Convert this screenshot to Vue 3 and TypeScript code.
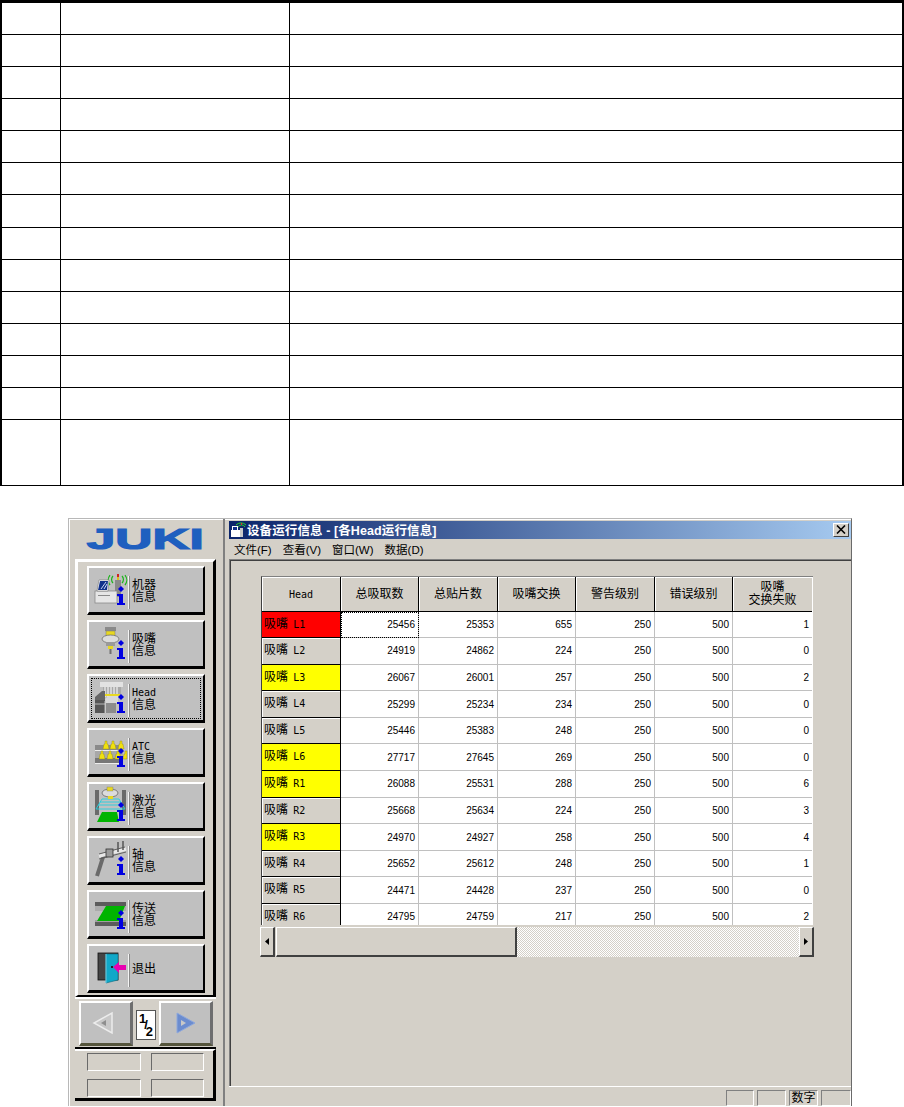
<script setup lang="ts">
interface NavItem { key: string; lines: string[]; focused?: boolean }
interface Row { name: string; tone: string; values: number[] }

const navItems: NavItem[] = [
  { key: 'machine', lines: ['机器', '信息'] },
  { key: 'nozzle', lines: ['吸嘴', '信息'] },
  { key: 'head', lines: ['Head', '信息'], focused: true },
  { key: 'atc', lines: ['ATC', '信息'] },
  { key: 'laser', lines: ['激光', '信息'] },
  { key: 'axis', lines: ['轴', '信息'] },
  { key: 'conveyor', lines: ['传送', '信息'] },
  { key: 'exit', lines: ['退出'] },
]

const headers = ['总吸取数', '总贴片数', '吸嘴交换', '警告级别', '错误级别']

const rows: Row[] = [
  { name: 'L1', tone: 'red', values: [25456, 25353, 655, 250, 500, 1] },
  { name: 'L2', tone: '', values: [24919, 24862, 224, 250, 500, 0] },
  { name: 'L3', tone: 'yellow', values: [26067, 26001, 257, 250, 500, 2] },
  { name: 'L4', tone: '', values: [25299, 25234, 234, 250, 500, 0] },
  { name: 'L5', tone: '', values: [25446, 25383, 248, 250, 500, 0] },
  { name: 'L6', tone: 'yellow', values: [27717, 27645, 269, 250, 500, 0] },
  { name: 'R1', tone: 'yellow', values: [26088, 25531, 288, 250, 500, 6] },
  { name: 'R2', tone: '', values: [25668, 25634, 224, 250, 500, 3] },
  { name: 'R3', tone: 'yellow', values: [24970, 24927, 258, 250, 500, 4] },
  { name: 'R4', tone: '', values: [25652, 25612, 248, 250, 500, 1] },
  { name: 'R5', tone: '', values: [24471, 24428, 237, 250, 500, 0] },
  { name: 'R6', tone: '', values: [24795, 24759, 217, 250, 500, 2] },
]

const blankCells = Array.from({ length: 42 }, (_, i) => i)
const menus = ['文件(F)', '查看(V)', '窗口(W)', '数据(D)']
</script>

<template>
  <div class="page">
    <div class="blank-table">
      <div v-for="c in blankCells" :key="c" class="blank-cell"></div>
    </div>

    <div class="window">
      <aside class="side">
        <div class="logo">
          <svg width="122" height="34" viewBox="0 0 69 34" preserveAspectRatio="none">
            <text
              x="0.5"
              y="27"
              font-family="Liberation Sans, sans-serif"
              font-weight="700"
              font-size="29"
              fill="#1f5fbf"
              stroke="#1f5fbf"
              stroke-width="1.2"
              stroke-linejoin="miter"
            >JUKI</text>
          </svg>
        </div>

        <div class="frame nav-frame">
          <button
            v-for="item in navItems"
            :key="item.key"
            type="button"
            class="nav-btn"
            :class="{ focused: item.focused }"
          >
            <svg class="nav-icon" width="38" height="44" viewBox="0 0 38 44">
              <template v-if="item.key === 'machine'">
                <path d="M20 7a8 8 0 0 0 0 10M23 8a5 5 0 0 0 0 7M35 7a8 8 0 0 1 0 10M32 8a5 5 0 0 1 0 7" fill="none" stroke="#19b519" stroke-width="1.2" />
                <rect x="27" y="6" width="2" height="3" fill="#d02020" />
                <rect x="27" y="9" width="2" height="3" fill="#d8c020" />
                <rect x="25" y="12" width="6" height="17" fill="#8a8a8a" />
                <rect x="5" y="23" width="22" height="12" fill="#e6e6e6" stroke="#8a8a8a" stroke-width="0.8" />
                <rect x="8" y="27" width="12" height="1" fill="#8a8a8a" />
                <path d="M9 12h10l-1 11H7z" fill="#fff" stroke="#777" stroke-width="0.6" />
                <path d="M10 13h8l-1 9H8z" fill="#10308a" />
                <path d="M11 21l5-7M14 21l3-5" stroke="#c8d4f0" stroke-width="1" />
              </template>

              <template v-else-if="item.key === 'nozzle'">
                <rect x="15" y="5" width="11" height="4" fill="#8a8a8a" />
                <rect x="16" y="9" width="9" height="5" fill="#e8d820" stroke="#777" stroke-width="0.5" />
                <ellipse cx="20.5" cy="17" rx="8.5" ry="4" fill="#dcdcdc" stroke="#707070" stroke-width="0.8" />
                <rect x="16" y="20" width="9" height="4" fill="#9a9a9a" />
                <rect x="18" y="24" width="5" height="3" fill="#e8d820" />
                <rect x="19.500" y="27" width="2" height="5" fill="#707070" />
              </template>

              <template v-else-if="item.key === 'head'">
                <rect x="10" y="6" width="23" height="5" fill="#e2e2e2" />
                <rect x="13" y="11" width="18" height="8" fill="#a8a8a8" />
                <path d="M15 11v10M18 11v10M21 11v10M24 11v10M27 11v10" stroke="#fff" stroke-width="1" />
                <path d="M14 19h16" stroke="#e8d820" stroke-width="2" />
                <path d="M5 21l7-6h3v9H5z" fill="#666" />
                <path d="M5 24h10v13H5z" fill="#555" />
                <path d="M15 23l4-3h9v7H16z" fill="#d8d8d8" />
                <path d="M16 27h10v10H16z" fill="#8c8c8c" />
                <path d="M15 25v12M5 28h10" stroke="#d0d0d0" stroke-width="0.8" />
              </template>

              <template v-else-if="item.key === 'atc'">
                <rect x="5" y="15" width="28" height="5" fill="#8a8a8a" />
                <rect x="5" y="20" width="28" height="1" fill="#eee" />
                <rect x="5" y="21" width="28" height="7" fill="#a8a8a8" />
                <rect x="5" y="28" width="28" height="5" fill="#777" />
                <rect x="5" y="33" width="28" height="1" fill="#eee" />
                <g fill="#f0e010" stroke="#8a8420" stroke-width="0.4">
                  <path d="M13 19l1-5h1v-3h2v3h1l1 5zM20 19l1-5h1v-3h2v3h1l1 5zM28 19l1-5h1v-3h2v3h1l1 5z" />
                  <path d="M9 29l1-5h1v-3h2v3h1l1 5zM17 29l1-5h1v-3h2v3h1l1 5zM25 29l1-5h1v-3h2v3h1l1 5zM33 29l1-5h1v-3h2v8z" />
                </g>
              </template>

              <template v-else-if="item.key === 'laser'">
                <rect x="5" y="6" width="4" height="25" fill="#6a6a6a" />
                <rect x="32" y="6" width="4" height="25" fill="#6a6a6a" />
                <path d="M12 15h17M10 18h21M8 21h25M6 25h29" stroke="#20d0e0" stroke-width="0.9" />
                <path d="M12 15L6 25M29 15l6 10" stroke="#20d0e0" stroke-width="0.9" />
                <ellipse cx="20" cy="9" rx="8" ry="4" fill="#dcdcdc" stroke="#666" stroke-width="0.8" />
                <rect x="17" y="3" width="6" height="4" fill="#e8d820" stroke="#777" stroke-width="0.4" />
                <rect x="18" y="12" width="5" height="3" fill="#e8d820" />
                <path d="M12 28h15l2 10H7z" fill="#00b400" />
              </template>

              <template v-else-if="item.key === 'axis'">
                <path d="M7 38l7-22" stroke="#6a6a6a" stroke-width="4" />
                <path d="M9 18l27-7" stroke="#e8e8e8" stroke-width="3.500" />
                <path d="M9 21l27-7M9 16l26-7" stroke="#555" stroke-width="0.9" />
                <rect x="16" y="11" width="7" height="8" fill="#9a9a9a" stroke="#333" stroke-width="0.8" />
                <path d="M28 4v10M33 3v9" stroke="#555" stroke-width="1.5" />
              </template>

              <template v-else-if="item.key === 'conveyor'">
                <rect x="5" y="10" width="31" height="4" fill="#5c5c5c" />
                <rect x="5" y="14" width="31" height="5" fill="#ababab" />
                <rect x="5" y="28" width="31" height="2" fill="#a0a0a0" />
                <rect x="5" y="30" width="31" height="4" fill="#5c5c5c" />
                <path d="M16 14h19l-6 15H7z" fill="#00b400" />
              </template>

              <template v-else>
                <rect x="8" y="7" width="20" height="27" fill="#444" stroke="#111" stroke-width="0.8" />
                <path d="M16 8h12v26l-12 3z" fill="#10a8c8" stroke="#0a6a80" stroke-width="0.6" />
                <path d="M16 8v29" stroke="#7adcf0" stroke-width="1" />
                <rect x="21" y="20" width="2" height="2" fill="#222" />
                <path d="M23 21l6-5v3h7v5h-7v3z" fill="#e800b0" />
              </template>

              <g v-if="item.key !== 'exit'" fill="#0000e0">
                <path d="M31 18l3 3-3 3-3-3z" />
                <path d="M27 26h6v9h2v2H27v-2h2v-7h-2z" />
              </g>
            </svg>
            <span class="nav-sep"></span>
            <span class="nav-label">
              <span
                v-for="line in item.lines"
                :key="line"
                :class="{ mono: /^[A-Za-z]+$/.test(line) }"
              >{{ line }}</span>
            </span>
          </button>
        </div>

        <div class="frame pager">
          <button type="button" class="page-btn back">
            <svg width="22" height="24" viewBox="0 0 22 24">
              <path d="M20 2v20L2 12z" fill="#c8c8c8" stroke="#ececec" stroke-width="1.5" />
              <path d="M14 9v6l-5-3z" fill="#8e8e8e" />
            </svg>
          </button>
          <div class="page-num"><span class="n1">1</span><span class="sl">/</span><span class="n2">2</span></div>
          <button type="button" class="page-btn">
            <svg width="22" height="24" viewBox="0 0 22 24">
              <path d="M2 2v20l18-10z" fill="#6b8ccf" stroke="#8ea8dc" stroke-width="1" />
              <path d="M6 9v6l5-3z" fill="#c8c8c8" />
            </svg>
          </button>
        </div>

        <div class="frame slots">
          <div v-for="n in 4" :key="n" class="slot"></div>
        </div>
      </aside>

      <main class="main">
        <div class="titlebar">
          <svg class="title-icon" width="16" height="16" viewBox="0 0 16 16">
            <path d="M1 8h9v7H1z" fill="#fff" />
            <path d="M2 4h6v5H2z" fill="#fff" />
            <path d="M3 5h4v3H3z" fill="#10308a" />
            <rect x="10" y="6" width="3" height="9" fill="#c8c8c8" />
            <path d="M8 5a4 4 0 0 1 7 0M6 3a7 7 0 0 1 10 0" fill="none" stroke="#2cd02c" stroke-width="1" />
            <rect x="11" y="1" width="1" height="2" fill="#e03030" />
          </svg>
          <span class="title-text">设备运行信息 - [各Head运行信息]</span>
          <button type="button" class="close-btn" aria-label="关闭">
            <svg width="10" height="9" viewBox="0 0 10 9">
              <path d="M1 0.5l8 8M9 0.5l-8 8" stroke="#000" stroke-width="1.6" />
            </svg>
          </button>
        </div>

        <nav class="menu">
          <span v-for="m in menus" :key="m">{{ m }}</span>
        </nav>

        <div class="client">
          <div class="grid-wrap">
            <div class="grid">
              <div class="hcell mono">Head</div>
              <div v-for="h in headers" :key="h" class="hcell">{{ h }}</div>
              <div class="hcell two"><span>吸嘴</span><span>交换失败</span></div>

              <template v-for="(row, r) in rows" :key="row.name">
                <div class="rowhead" :class="row.tone">吸嘴 <span class="mono">{{ row.name }}</span></div>
                <div
                  v-for="(v, i) in row.values"
                  :key="i"
                  class="cell"
                  :class="{ current: r === 0 && i === 0 }"
                >{{ v }}</div>
              </template>
            </div>
          </div>

          <div class="hscroll">
            <div class="sb-btn"><svg width="4" height="7" viewBox="0 0 4 7"><path d="M4 0v7L0 3.5z" fill="#000" /></svg></div>
            <div class="sb-thumb"></div>
            <div class="sb-track"></div>
            <div class="sb-btn"><svg width="4" height="7" viewBox="0 0 4 7"><path d="M0 0v7l4-3.5z" fill="#000" /></svg></div>
          </div>
        </div>

        <footer class="status">
          <div class="st w28"></div>
          <div class="st w29"></div>
          <div class="st w29">数字</div>
          <div class="st w30"></div>
        </footer>
      </main>
    </div>
  </div>
</template>

<style>
html, body { margin: 0; background: #fff; }
</style>

<style scoped>
.page {
  width: 904px;
  font-family: "Liberation Sans", "Noto Sans CJK SC", sans-serif;
  color: #000;
}

.blank-table {
  display: grid;
  grid-template-columns: 59px 229px 1fr;
  grid-template-rows: repeat(13, 32.08px) 64.500px;
  box-sizing: border-box;
  width: 904px;
  border-top: 3px solid #000;
  border-left: 2px solid #000;
  border-right: 2px solid #000;
  border-bottom: 1px solid #000;
}
.blank-cell {
  box-sizing: border-box;
  border-right: 1px solid #000;
  border-bottom: 1px solid #000;
}
.blank-cell:nth-child(3n) { border-right: 0; }
.blank-cell:nth-last-child(-n + 3) { border-bottom: 0; }

.window {
  display: flex;
  box-sizing: border-box;
  width: 784px;
  height: 588px;
  margin: 32px 0 0 68px;
  background: #d4d0c8;
  border-top: 1px solid #b8b8b8;
  border-left: 1px solid #b8b8b8;
  border-right: 1px solid #6a6a6a;
  box-shadow: inset 1px 1px 0 #fff;
}

/* left panel */
.side {
  box-sizing: border-box;
  width: 156px;
  flex: none;
  padding-left: 6px;
  border-right: 2px solid #808080;
}
.logo {
  height: 40px;
  display: flex;
  align-items: center;
  padding-left: 11px;
}
.logo svg { display: block; }
.frame {
  box-sizing: border-box;
  width: 141px;
  border-style: solid;
  border-color: #fff #000 #000 #fff;
}
.nav-frame {
  height: 438px;
  border-width: 3px 3px 2px;
  padding: 4px 0 0 9px;
  display: flex;
  flex-direction: column;
  gap: 5px;
}
.nav-btn {
  box-sizing: border-box;
  width: 118px;
  height: 49px;
  flex: none;
  padding: 0 0 0 1px;
  margin: 0;
  display: flex;
  align-items: center;
  background: #c0c0c0;
  border-style: solid;
  border-width: 2px 2px 3px 2px;
  border-color: #fff #000 #000 #fff;
  font: inherit;
  color: #000;
  text-align: left;
}
.nav-btn.focused {
  outline: 1px dotted #000;
  outline-offset: -5px;
}
.nav-icon { display: block; flex: none; }
.nav-sep {
  width: 1px;
  height: 33px;
  margin-top: 5px;
  background: #f4f4f4;
  border-right: 1px solid #8a8a8a;
  flex: none;
}
.nav-label {
  display: flex;
  flex-direction: column;
  margin: 3px 0 0 2px;
  font-size: 12px;
  line-height: 12px;
}
.mono {
  font-family: "DejaVu Sans Mono", "Noto Sans CJK SC", monospace;
  font-size: 10px;
}

.pager {
  height: 52px;
  border-width: 2px 0 2px 0;
  padding: 2px 3px 0 4px;
  display: flex;
  justify-content: space-between;
  align-items: flex-start;
}
.page-btn {
  box-sizing: border-box;
  width: 54px;
  height: 45px;
  padding: 0;
  margin: 0;
  display: flex;
  align-items: center;
  justify-content: center;
  background: #c0c0c0;
  border-style: solid;
  border-width: 2px 3px 3px 2px;
  border-color: #fff #6e6e6e #55553c #fff;
}
.page-btn.back svg { margin-right: 6px; }
.page-num {
  box-sizing: border-box;
  width: 20px;
  height: 30px;
  margin-top: 9px;
  background: #fff;
  border: 1px solid #555;
  display: flex;
  justify-content: center;
  font: 700 13px "Liberation Sans", sans-serif;
  line-height: 13px;
}
.page-num .n1 { align-self: flex-start; margin-top: 1px; margin-right: -2px; }
.page-num .sl { align-self: center; }
.page-num .n2 { align-self: flex-end; margin-bottom: 1px; margin-left: -2px; }

.slots {
  height: 52px;
  border-width: 2px 3px 3px 0;
  padding: 2px 9px 0 12px;
  display: grid;
  grid-template-columns: 54px 53px;
  grid-template-rows: 18px 18px;
  column-gap: 10px;
  row-gap: 8px;
}
.slot {
  box-sizing: border-box;
  border-style: solid;
  border-width: 1px;
  border-color: #6a6a6a #fff #fff #6a6a6a;
}

/* right panel */
.main {
  flex: 1;
  min-width: 0;
  box-sizing: border-box;
  padding: 2px 0 0 4px;
  display: flex;
  flex-direction: column;
}
.titlebar {
  height: 18px;
  flex: none;
  display: flex;
  align-items: center;
  background: linear-gradient(90deg, #0a246a, #a6caf0);
  padding: 0 2px 0 1px;
}
.title-icon { flex: none; }
.title-text {
  margin-left: 1px;
  color: #fff;
  font-size: 12.5px;
  letter-spacing: 0.1px;
  font-weight: 700;
  white-space: nowrap;
}
.close-btn {
  box-sizing: border-box;
  width: 16px;
  height: 14px;
  margin: 0 0 0 auto;
  padding: 0;
  display: flex;
  align-items: center;
  justify-content: center;
  background: #d4d0c8;
  border-style: solid;
  border-width: 1px;
  border-color: #fff #404040 #404040 #fff;
}
.menu {
  height: 20px;
  flex: none;
  display: flex;
  align-items: center;
  gap: 11px;
  padding-left: 5px;
  font-size: 11.5px;
}
.client {
  flex: 1;
  min-height: 0;
  box-sizing: border-box;
  border-top: 1px solid #808080;
  border-left: 1px solid #808080;
  box-shadow: inset 1px 1px 0 #404040;
  padding: 16px 0 0 31px;
}
.grid-wrap {
  box-sizing: border-box;
  width: 552px;
  height: 349px;
  overflow: hidden;
  background: #fff;
  border-top: 1px solid #808080;
  border-left: 1px solid #404040;
}
.grid {
  display: grid;
  grid-template-columns: 79px 78px 79px 78px 79px 78px 79px;
  grid-template-rows: 35px repeat(12, 26.6px);
}
.hcell {
  box-sizing: border-box;
  display: flex;
  flex-direction: column;
  align-items: center;
  justify-content: center;
  padding-top: 1px;
  background: #d4d0c8;
  border-right: 1px solid #000;
  border-bottom: 1px solid #000;
  box-shadow: inset 1px 1px 0 #fff;
  font-size: 12px;
  line-height: 13px;
}
.hcell:nth-child(7) { border-right: 0; }
.hcell.mono { font-size: 10px; }
.rowhead {
  box-sizing: border-box;
  padding-left: 2px;
  background: #d4d0c8;
  border-right: 1px solid #000;
  border-bottom: 1px solid #000;
  box-shadow: inset 1px 1px 0 #fff;
  font-size: 12px;
  line-height: 25px;
  white-space: nowrap;
}
.rowhead .mono { margin-left: 2px; }
.rowhead.red { background: #f00; box-shadow: none; }
.rowhead.yellow { background: #ff0; box-shadow: none; }
.cell {
  box-sizing: border-box;
  display: flex;
  align-items: center;
  justify-content: flex-end;
  padding-right: 3px;
  background: #fff;
  border-right: 1px solid #c0c0c0;
  border-bottom: 1px solid #c0c0c0;
  font-size: 10px;
}
.cell:nth-child(7n) { border-right: 0; }
.cell.current { outline: 1px dotted #000; outline-offset: -1px; }

.hscroll {
  display: flex;
  width: 554px;
  height: 30px;
  margin: 2px 0 0 -1px;
}
.sb-btn, .sb-thumb {
  box-sizing: border-box;
  background: #d4d0c8;
  border-style: solid;
  border-width: 1px 2px 2px 1px;
  border-color: #fff #404040 #404040 #fff;
}
.sb-btn {
  width: 15px;
  flex: none;
  display: flex;
  align-items: center;
  justify-content: center;
}
.sb-thumb { width: 241px; flex: none; margin-left: 1px; }
.sb-track {
  flex: 1;
  background: repeating-conic-gradient(#fff 0 25%, #d4d0c8 0 50%) 0 0 / 2px 2px;
}

.status {
  box-sizing: border-box;
  height: 20px;
  flex: none;
  display: flex;
  justify-content: flex-end;
  gap: 3px;
  padding-top: 3px;
  border-top: 1px solid #fff;
  font-size: 12px;
}
.st {
  box-sizing: border-box;
  height: 16px;
  border-style: solid;
  border-width: 1px;
  border-color: #808080 #fff #fff #808080;
  line-height: 14px;
  text-align: center;
}
.w28 { width: 28px; }
.w29 { width: 29px; }
.w30 { width: 30px; }
</style>
